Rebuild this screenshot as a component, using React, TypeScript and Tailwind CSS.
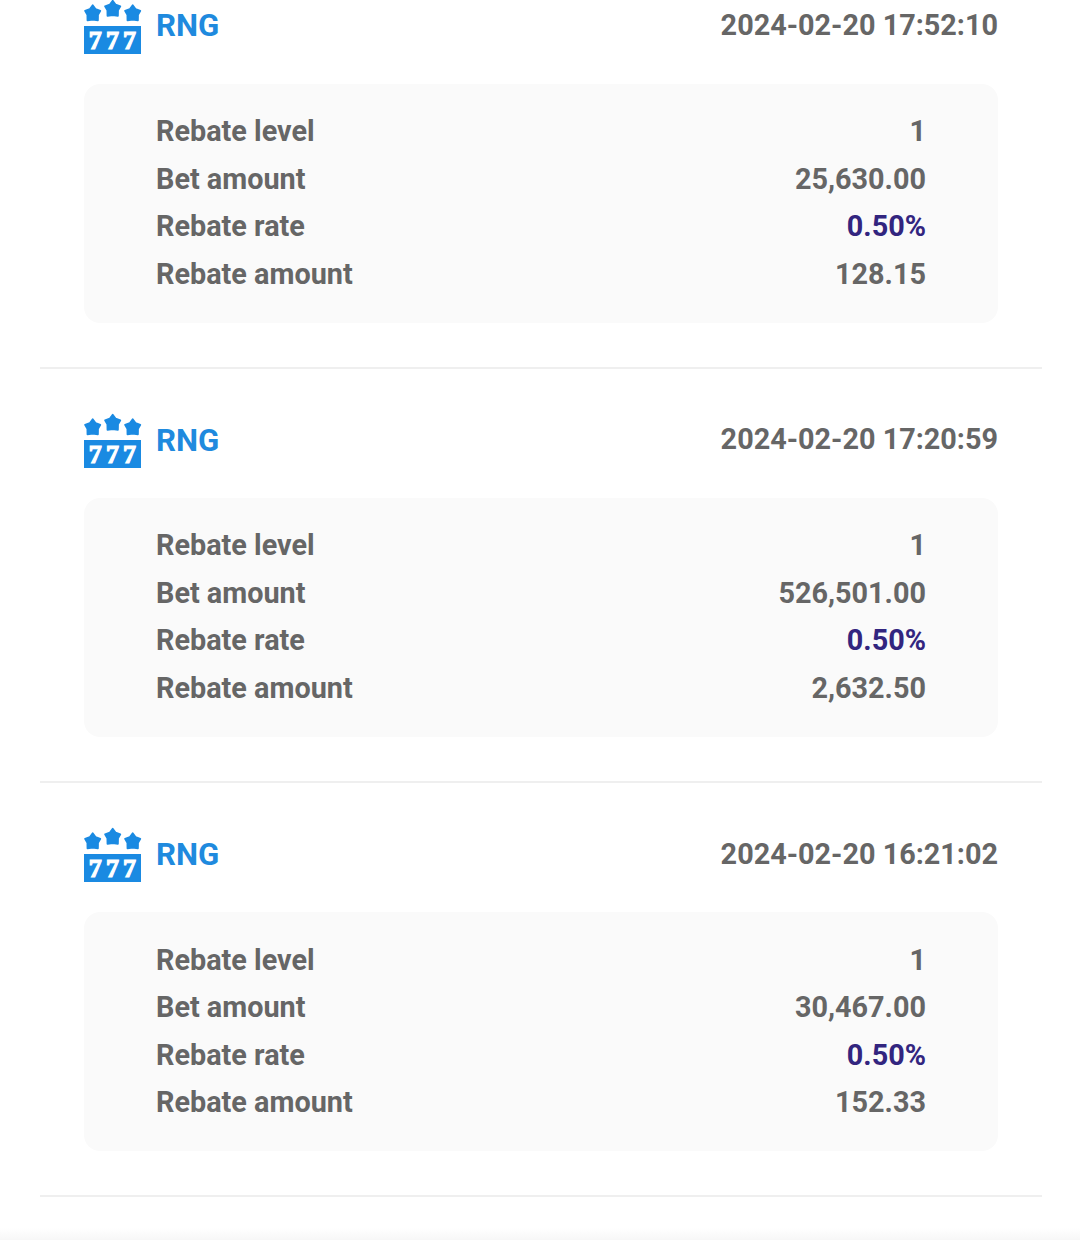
import React from 'react';

type RebateRecord = {
  time: string;
  level: string;
  bet: string;
  rate: string;
  rebate: string;
};

const records: RebateRecord[] = [
  { time: '2024-02-20 17:52:10', level: '1', bet: '25,630.00', rate: '0.50%', rebate: '128.15' },
  { time: '2024-02-20 17:20:59', level: '1', bet: '526,501.00', rate: '0.50%', rebate: '2,632.50' },
  { time: '2024-02-20 16:21:02', level: '1', bet: '30,467.00', rate: '0.50%', rebate: '152.33' },
];

const Star = ({ x, y }: { x: number; y: number }) => (
  <path
    transform={`translate(${x} ${y})`}
    d="M0 -7.8 L3 -3.8 L7.6 -2.2 L5.3 1.9 L5.2 7.3 L0 6.6 L-5.2 7.3 L-5.3 1.9 L-7.6 -2.2 L-3 -3.8 Z"
    strokeWidth="1.8"
    strokeLinejoin="round"
  />
);

const SlotIcon = () => (
  <svg width="58" height="56" viewBox="0 0 58 56" fill="#1a8ae2" stroke="#1a8ae2" className="overflow-visible">
    <Star x={8.7} y={14} />
    <Star x={28.7} y={9.5} />
    <Star x={48.7} y={14} />
    <rect x="0" y="27" width="57" height="28" stroke="none" />
    {[11.2, 28.6, 45.6].map((x) => (
      <text
        key={x}
        x={x}
        y="49.5"
        textAnchor="middle"
        className="font-['Liberation_Serif',serif] text-[26px] leading-none font-bold"
        fill="#fff"
        stroke="#fff"
        strokeWidth="1.2"
      >
        7
      </text>
    ))}
  </svg>
);

const RebateItem = ({ record }: { record: RebateRecord }) => {
  const rows = [
    { label: 'Rebate level', value: record.level },
    { label: 'Bet amount', value: record.bet },
    { label: 'Rebate rate', value: record.rate, highlight: true },
    { label: 'Rebate amount', value: record.rebate },
  ];

  return (
    <div className="h-[414.2px] border-b-2 border-[#efefef] px-11 pt-[43.7px]">
      <div className="flex h-[57px] items-center justify-between">
        <div className="flex items-center gap-[14px]">
          <SlotIcon />
          <span className="-mt-[1.5px] text-[31.2px] leading-none text-[#1f8ade]">RNG</span>
        </div>
        <span className="-mt-[2.5px]">{record.time}</span>
      </div>
      <div className="mt-[28.3px] h-[239px] rounded-2xl bg-[#fafafa] px-18 pt-[24.2px]">
        {rows.map((row) => (
          <div key={row.label} className="flex h-[47.5px] items-center justify-between">
            <span>{row.label}</span>
            <span className={row.highlight ? 'text-[#32257f]' : ''}>{row.value}</span>
          </div>
        ))}
      </div>
    </div>
  );
};

const App = () => {
  return (
    <div className="flex h-[1240px] flex-col justify-between overflow-hidden bg-white font-[Roboto,sans-serif] text-[28.8px] leading-none font-bold text-[#666]">
      <div className="-mt-[45.4px] mr-[38px] ml-10">
        {records.map((record) => (
          <RebateItem key={record.time} record={record} />
        ))}
      </div>
      {/* Shadow of the footer below */}
      <div className="h-3 bg-linear-to-b from-white to-[#f7f7f7]" />
    </div>
  );
};

export default App;
